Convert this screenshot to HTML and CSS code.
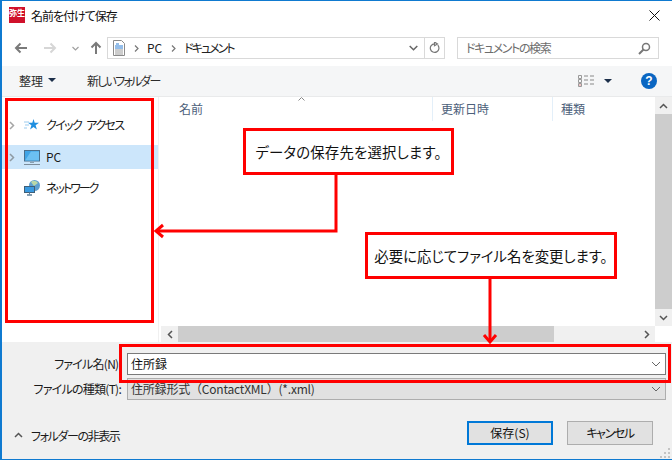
FILE: index.html
```html
<!DOCTYPE html>
<html lang="ja">
<head>
<meta charset="utf-8">
<title>名前を付けて保存</title>
<link rel="stylesheet" href="styles.css">
</head>
<body>
<div class="dialog">
  <header class="titlebar">
    <div class="logo"><span>弥生</span></div>
    <div class="title">名前を付けて保存</div>
    <svg class="close" width="11" height="11" viewBox="0 0 11 11"><path d="M.5.5l10 10M10.500.5l-10 10" stroke="#111" stroke-width="1" fill="none"/></svg>
  </header>
  <nav class="navbar">
    <div class="navbtns">
      <svg class="nb" width="13" height="12" viewBox="0 0 13 12"><path d="M13 6H2M6.500 1.500L2 6l4.500 4.500" stroke="#7a7a7a" stroke-width="2" fill="none"/></svg>
      <svg class="nb fwd" width="13" height="12" viewBox="0 0 13 12"><path d="M0 6h11M6.500 1.500L11 6l-4.500 4.500" stroke="#d6d6d6" stroke-width="2" fill="none"/></svg>
      <svg class="nb dn" width="7" height="5" viewBox="0 0 7 5"><path d="M.5 1l3 3 3-3" stroke="#a0a0a0" stroke-width="1.200" fill="none"/></svg>
      <svg class="nb up" width="12" height="14" viewBox="0 0 12 14"><path d="M6 13V2M1.500 6.500L6 2l4.500 4.500" stroke="#7a7a7a" stroke-width="2" fill="none"/></svg>
    </div>
    <div class="address">
      <svg class="docicon" width="12" height="16" viewBox="0 0 12 16"><path d="M.5.5h8l3 3v12H.5z" fill="#fff" stroke="#8a8a8a"/><path d="M3 4h3M2 6h8M2 8h8" stroke="#2b7cd3"/><path d="M2 10h8M2 12h8M2 14h8" stroke="#9a9a9a"/></svg>
      <svg class="sep" width="5" height="7" viewBox="0 0 5 7"><path d="M1 .5l3 3-3 3" stroke="#777" stroke-width="1.200" fill="none"/></svg>
      <span class="crumb">PC</span>
      <svg class="sep" width="5" height="7" viewBox="0 0 5 7"><path d="M1 .5l3 3-3 3" stroke="#777" stroke-width="1.200" fill="none"/></svg>
      <span class="crumb kana-tight">ドキュメント</span>
      <div class="addr-spacer"></div>
      <svg class="addr-dn" width="9" height="6" viewBox="0 0 9 6"><path d="M.7 1l3.800 3.800L8.300 1" stroke="#666" stroke-width="1.500" fill="none"/></svg>
      <div class="refresh"><svg width="11" height="12" viewBox="0 0 11 12"><path d="M8.800 3.200A4.300 4.300 0 1 1 5.500 1.800M5.500 0v3.800L8.500 2z" stroke="#777" stroke-width="1.200" fill="none"/></svg></div>
    </div>
    <div class="search">
      <span class="kana">ドキュメントの検索</span>
      <svg width="13" height="13" viewBox="0 0 13 13"><circle cx="8" cy="5" r="3.500" stroke="#777" stroke-width="1.500" fill="none"/><path d="M5.500 7.500L1 12" stroke="#777" stroke-width="2"/></svg>
    </div>
  </nav>
  <div class="toolbar">
    <div class="tool organize"><span>整理</span><i class="caret"></i></div>
    <div class="tool kana-folder">新しいフォルダー</div>
    <div class="tool-spacer"></div>
    <svg class="viewicon" width="16" height="12" viewBox="0 0 16 12"><path d="M.5.500h3v3h-3zM.5 4.500h3v3h-3zM.5 8.500h3v3h-3z" fill="none" stroke="#999"/><path d="M6 1h4M6 5h4M6 9h4M12 1h4M12 5h4M12 9h4" stroke="#888"/><path d="M1.500 9.500h1v1h-1z" fill="#d33"/></svg>
    <i class="caret view-caret"></i>
    <div class="help">?</div>
  </div>
  <main class="content">
    <aside class="sidebar">
      <div class="tree-row quick">
        <svg class="chev" width="6" height="9" viewBox="0 0 6 9"><path d="M1 1l3.500 3.500L1 8" stroke="#a6a6a6" stroke-width="1.500" fill="none"/></svg>
        <svg class="treeicon" width="16" height="14" viewBox="0 0 16 14"><path d="M9.500 1l1.200 3.800H15l-3.400 2.500 1.300 4.200-3.400-2.600-3.400 2.600 1.300-4.200L4 4.800h4.300z" fill="#1f8fe0"/><path d="M0 4h5M1 7h4M0 10h3" stroke="#9ccbee"/></svg>
        <span class="kana-quick">クイック アクセス</span>
      </div>
      <div class="tree-row pc">
        <svg class="chev" width="6" height="9" viewBox="0 0 6 9"><path d="M1 1l3.500 3.500L1 8" stroke="#8f9aa3" stroke-width="1.500" fill="none"/></svg>
        <svg class="treeicon" width="16" height="15" viewBox="0 0 16 15"><rect x=".5" y=".5" width="15" height="10.500" fill="#3fa4e6" stroke="#4a6f8c"/><path d="M1 10.500l6-9h8v9z" fill="#6cc0f2"/><path d="M6 12.500h4" stroke="#8aa0b0"/><path d="M0 14.500h16" stroke="#7c8c9a"/></svg>
        <span>PC</span>
      </div>
      <div class="tree-row net">
        <svg class="treeicon" width="16" height="16" viewBox="0 0 16 16"><circle cx="10.500" cy="5.500" r="5.500" fill="#5d9fd0"/><path d="M7 2c2-2 5-1.500 7 1l-4 3z" fill="#b9d8a8"/><rect x=".5" y="6.500" width="10" height="6" fill="#3a9ae0" stroke="#3f5f78"/><path d="M3 15h5" stroke="#5f7f98" stroke-width="1.500"/><path d="M5.500 12.500v2" stroke="#5f7f98"/></svg>
        <span class="kana-net">ネットワーク</span>
      </div>
    </aside>
    <section class="files">
      <div class="files-main">
        <div class="list">
          <div class="columns">
            <div class="col col-name">名前<svg class="sort" width="7" height="4" viewBox="0 0 7 4"><path d="M.5 3.500l3-3 3 3" stroke="#888" fill="none"/></svg></div>
            <div class="col col-date">更新日時</div>
            <div class="col col-type">種類</div>
          </div>
        </div>
        <div class="vscroll">
          <div class="sb-btn"><svg width="9" height="6" viewBox="0 0 9 6"><path d="M1 5l3.500-3.500L8 5" stroke="#555" stroke-width="1.500" fill="none"/></svg></div>
          <div class="vthumb"></div>
          <div class="sb-btn"><svg width="9" height="6" viewBox="0 0 9 6"><path d="M1 1l3.500 3.500L8 1" stroke="#555" stroke-width="1.500" fill="none"/></svg></div>
        </div>
      </div>
      <div class="hscroll">
        <div class="hb-btn"><svg width="6" height="9" viewBox="0 0 6 9"><path d="M5 1L1.500 4.500 5 8" stroke="#555" stroke-width="1.500" fill="none"/></svg></div>
        <div class="hthumb"></div>
        <div class="htrack"></div>
        <div class="hb-btn"><svg width="6" height="9" viewBox="0 0 6 9"><path d="M1 1l3.500 3.500L1 8" stroke="#555" stroke-width="1.500" fill="none"/></svg></div>
        <div class="hcorner"></div>
      </div>
    </section>
  </main>
  <section class="form">
    <div class="form-row name-row">
      <label>ファイル名(N):</label>
      <div class="field name-field"><span>住所録</span><svg width="10" height="6" viewBox="0 0 10 6"><path d="M1 1l4 4 4-4" stroke="#666" fill="none"/></svg></div>
    </div>
    <div class="form-row type-row">
      <label>ファイルの種類(T):</label>
      <div class="field type-field"><span class="full">住所録形式（ContactXML）(*.xml)</span><svg width="10" height="6" viewBox="0 0 10 6"><path d="M1 1l4 4 4-4" stroke="#666" fill="none"/></svg></div>
    </div>
    <div class="actions">
      <div class="hide-folders">
        <svg width="9" height="6" viewBox="0 0 9 6"><path d="M1 5l3.500-3.500L8 5" stroke="#555" stroke-width="1.500" fill="none"/></svg>
        <span class="kana">フォルダーの非表示</span>
      </div>
      <div class="btn primary">保存(S)</div>
      <div class="btn kana">キャンセル</div>
    </div>
    <svg class="grip" width="11" height="11" viewBox="0 0 11 11"><path d="M8 0h2v2H8zM4 4h2v2H4zM8 4h2v2H8zM0 8h2v2H0zM4 8h2v2H4zM8 8h2v2H8z" fill="#c4c4c4"/></svg>
  </section>

  <div class="hl hl-side"></div>
  <div class="hl hl-name"></div>
  <div class="callout callout-a">データの保存先を選択します。</div>
  <div class="callout callout-b">必要に応じてファイル名を変更します。</div>
  <svg class="arrows" width="672" height="460" viewBox="0 0 672 460">
    <path d="M336 175V231H156" fill="none" stroke="#f00" stroke-width="3"/>
    <path d="M163 225l-7 6 7 6" fill="none" stroke="#f00" stroke-width="3"/>
    <path d="M490 278V342" fill="none" stroke="#f00" stroke-width="3"/>
    <path d="M484 335l6 7 6-7" fill="none" stroke="#f00" stroke-width="3"/>
  </svg>
</div>
</body>
</html>
```
FILE: styles.css
```css
* { box-sizing: border-box; }
html, body { margin: 0; padding: 0; }
body {
  width: 672px; height: 460px; overflow: hidden; background: #fff;
  font-family: "Noto Sans CJK JP", "Noto Sans", sans-serif;
  font-size: 12px; color: #1a1a1a;
  font-feature-settings: "palt";
}
.kana { letter-spacing: -1.4px; }
.kana-folder { letter-spacing: -1.8px; }
.kana-quick { letter-spacing: -1.6px; word-spacing: 4px; }
.kana-tight { letter-spacing: -2px; }
.kana-net { letter-spacing: -2px; }
.dialog {
  position: relative; width: 672px; height: 460px;
  display: flex; flex-direction: column;
  border: 1px solid #0f7ad0; border-left-width: 2px; border-right-width: 0;
  background: #fff;
}
.titlebar { height: 29px; flex: none; display: flex; align-items: center; padding: 0 12px 0 7px; }
.logo {
  width: 16px; height: 16px; background: #d0112b; color: #fff;
  font-size: 8px; line-height: 11px; text-align: center; font-weight: 700; margin-top: -1px;
}
.logo span { display: block; letter-spacing: 0; white-space: nowrap; }
.title { margin-left: 6px; color: #111; flex: 1; margin-top: -1px; letter-spacing: -1px; }
.navbar { height: 36px; flex: none; display: flex; align-items: center; padding: 0 12px 0 0; }
.navbtns { width: 105px; height: 22px; display: flex; align-items: center; padding-left: 12px; }
.nb { flex: none; }
.fwd { margin-left: 17px; }
.dn { margin-left: 15px; }
.up { margin-left: 11px; }
.address {
  width: 338px; height: 22px; border: 1px solid #d9d9d9; display: flex; align-items: center;
  padding-left: 5px; background: #fff;
}
.docicon { margin-right: 9px; }
.address .sep { margin-right: 8px; }
.crumb { margin-right: 9px; color: #222; padding-bottom: 2px; }
.addr-spacer { flex: 1; }
.addr-dn { margin-right: 6px; }
.refresh { width: 20px; height: 20px; border-left: 1px solid #d9d9d9; display: flex; align-items: center; justify-content: center; }
.search {
  width: 202px; height: 22px; margin-left: 12px; border: 1px solid #d9d9d9; display: flex;
  align-items: center; justify-content: space-between; padding: 0 7px 2px 8px; color: #6d6d6d;
}
.search svg { margin-top: 2px; }
.toolbar {
  height: 31px; flex: none; background: #f5f6f7; border-bottom: 1px solid #e9eaeb;
  display: flex; align-items: center; padding-left: 17px;
}
.tool { color: #2b2b2b; padding-bottom: 2px; }
.organize { display: flex; align-items: center; width: 68px; }
.caret { display: block; width: 0; height: 0; border: 4px solid transparent; border-top: 4px solid #1c2f4a; border-bottom: 0; margin-left: 5px; }
.tool-spacer { flex: 1; }
.viewicon { flex: none; }
.view-caret { margin-left: 10px; margin-right: 29px; }
.help {
  width: 16px; height: 16px; border-radius: 50%; background: #0a66c2; color: #fff; font-weight: 700;
  font-size: 12px; line-height: 16px; text-align: center; margin-right: 15px; font-family: "Liberation Sans", sans-serif;
}
.content { flex: none; height: 245px; display: flex; background: #fff; }
.sidebar { width: 156px; flex: none; padding-top: 16px; }
.tree-row { height: 24px; display: flex; align-items: center; position: relative; padding-left: 22px; color: #1a1a1a; }
.tree-row span { margin-left: 6px; padding-bottom: 1px; }
.chev { position: absolute; left: 7px; top: 8px; }
.treeicon { flex: none; }
.quick { margin-bottom: 8px; }
.pc { background: #cce6fb; margin-bottom: 7px; }
.files { flex: 1; min-width: 0; display: flex; flex-direction: column; border-left: 1px solid #f0f0f0; }
.files-main { flex: 1; display: flex; min-height: 0; }
.list { flex: 1; min-width: 0; }
.columns { height: 24px; display: flex; color: #4c607a; }
.col { position: relative; padding-left: 8px; line-height: 24px; border-right: 1px solid #e3eff9; }
.col-name { width: 274px; padding-left: 20px; }
.col-date { width: 120px; }
.col-type { flex: 1; border-right: 0; }
.sort { position: absolute; left: 139px; top: 0; }
.vscroll { width: 17px; flex: none; background: #f0f0f0; display: flex; flex-direction: column; }
.sb-btn { height: 17px; flex: none; display: flex; align-items: center; justify-content: center; }
.vthumb { flex: 1; background: #cdcdcd; }
.hscroll { height: 16px; flex: none; display: flex; padding-left: 2px; }
.hb-btn { width: 17px; flex: none; background: #f0f0f0; display: flex; align-items: center; justify-content: center; }
.hthumb { width: 376px; background: #cdcdcd; flex: none; }
.htrack { flex: 1; background: #f0f0f0; }
.hcorner { width: 17px; flex: none; background: #fff; }
.form { flex: 1; background: #f0f0f0; position: relative; padding-top: 10px; }
.form-row { display: flex; align-items: center; height: 23px; }
.form-row label { width: 125px; flex: none; text-align: right; color: #1a1a1a; padding-right: 6px; white-space: nowrap; letter-spacing: -.75px; }
.field { width: 539px; display: flex; align-items: center; justify-content: space-between; padding: 0 4px 0 3px; }
.name-field { height: 22px; background: #fff; border: 1px solid #7a7a7a; color: #111; }
.type-row { margin-top: 2px; }
.type-field { height: 22px; background: #e1e1e1; border: 1px solid #adadad; color: #333; }
.full { font-feature-settings: normal; letter-spacing: -.2px; }
.actions { display: flex; align-items: center; margin-top: 21px; height: 24px; padding-right: 19px; }
.hide-folders { display: flex; align-items: center; flex: 1; padding: 4px 0 0 12px; }
.hide-folders span { margin-left: 8px; }
.btn {
  width: 86px; height: 24px; background: #e1e1e1; border: 1px solid #adadad; text-align: center;
  line-height: 21px; color: #111; margin-left: 14px;
}
.btn.primary { border: 2px solid #0078d7; line-height: 19px; }
.grip { position: absolute; right: 1px; bottom: 0; }
.hl { position: absolute; border: 3px solid #f00; }
.hl-side { left: 3px; top: 97px; width: 149px; height: 225px; }
.hl-name { left: 117px; top: 343px; width: 552px; height: 39px; }
.callout {
  position: absolute; background: #fff; border: 3px solid #f00; color: #111;
  font-size: 14.4px; display: flex; align-items: center; justify-content: center; white-space: nowrap;
}
.callout-a { left: 241px; top: 127px; width: 211px; height: 47px; letter-spacing: .2px; }
.callout-b { left: 363px; top: 231px; width: 252px; height: 47px; }
.arrows { position: absolute; left: -2px; top: -1px; pointer-events: none; }
```
